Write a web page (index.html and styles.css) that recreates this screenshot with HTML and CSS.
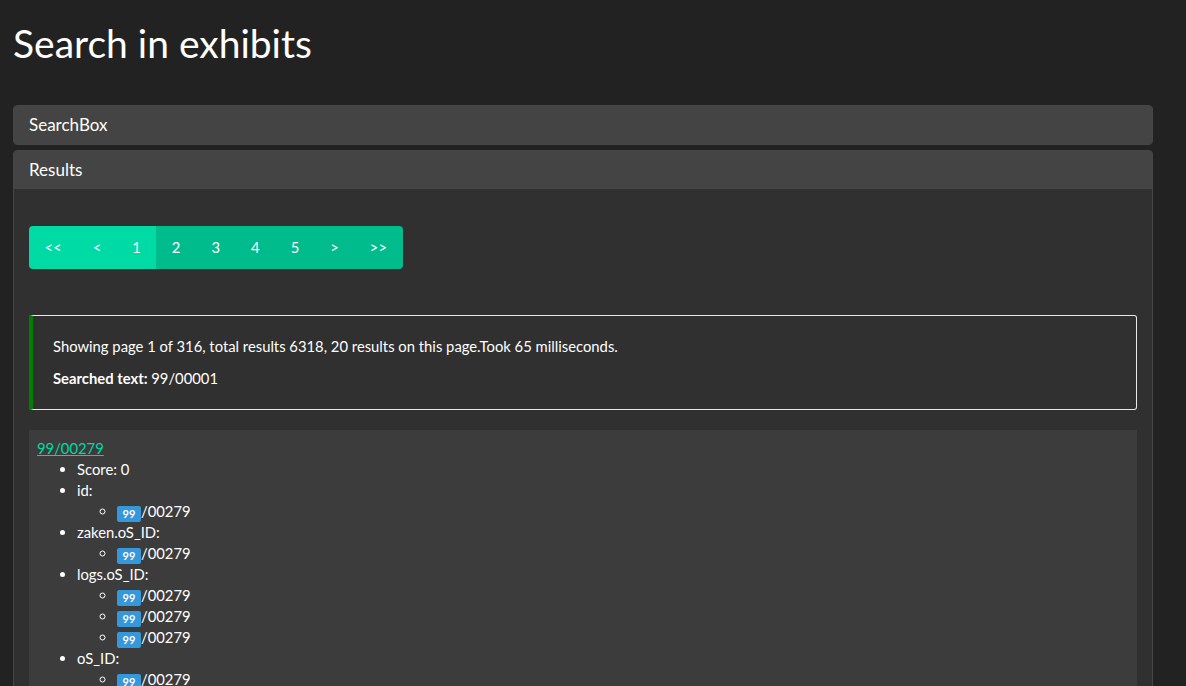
FILE: index.html
```html
<!DOCTYPE html>
<html>
<head>
<meta charset="utf-8">
<link rel="stylesheet" href="styles.css">
</head>
<body>
<div class="container">
  <h1 class="title">Search in exhibits</h1>
  <div class="panel">
    <div class="panel-heading">SearchBox</div>
  </div>
  <div class="panel">
    <div class="panel-heading">Results</div>
    <div class="panel-body">
      <ul class="pagination">
        <li class="light"><span>&lt;&lt;</span></li>
        <li class="light"><span>&lt;</span></li>
        <li class="light"><span>1</span></li>
        <li><span>2</span></li>
        <li><span>3</span></li>
        <li><span>4</span></li>
        <li><span>5</span></li>
        <li><span>&gt;</span></li>
        <li><span>&gt;&gt;</span></li>
      </ul>
      <div class="alert">
        <p>Showing page 1 of 316, total results 6318, 20 results on this page.Took 65 milliseconds.</p>
        <p><strong>Searched text:</strong> 99/00001</p>
      </div>
      <div class="result">
        <a href="#" class="result-link">99/00279</a>
        <ul class="fields">
          <li>Score: 0</li>
          <li>id:
            <ul><li><span class="badge">99</span>/00279</li></ul>
          </li>
          <li>zaken.oS_ID:
            <ul><li><span class="badge">99</span>/00279</li></ul>
          </li>
          <li>logs.oS_ID:
            <ul>
              <li><span class="badge">99</span>/00279</li>
              <li><span class="badge">99</span>/00279</li>
              <li><span class="badge">99</span>/00279</li>
            </ul>
          </li>
          <li>oS_ID:
            <ul><li><span class="badge">99</span>/00279</li></ul>
          </li>
        </ul>
      </div>
    </div>
  </div>
</div>
</body>
</html>
```

FILE: styles.css
```css
html, body {
  margin: 0;
  padding: 0;
  background: #222222;
  color: #ffffff;
  font-family: Lato, "Open Sans", sans-serif;
  font-size: 14.8px;
  line-height: 21px;
}
.container {
  width: 1140px;
  padding: 0 0 0 13px;
}
.title {
  margin: 0;
  padding-top: 20px;
  font-size: 39px;
  font-weight: 400;
  line-height: 46px;
  height: 85px;
}
.panel {
  background: #303030;
  border: 1px solid #464646;
  border-radius: 4px;
  margin-bottom: 5px;
  overflow: hidden;
}
.panel-heading {
  background: #444444;
  height: 38px;
  line-height: 38px;
  padding: 0 15px;
  font-size: 17px;
}
.panel-body {
  padding: 37px 15px 0 15px;
}
.pagination {
  display: inline-flex;
  list-style: none;
  margin: 0 0 46px 0;
  padding: 0;
  border-radius: 4px;
  overflow: hidden;
}
.pagination li span {
  display: block;
  height: 43px;
  line-height: 43px;
  padding: 0 15.5px;
  background: #00bc8c;
  color: #ffffff;
  font-size: 14.8px;
}
.pagination li.light span {
  background: #00daa5;
}
.alert {
  border: 1px solid #e8e8e8;
  border-left: 4px solid #008000;
  border-radius: 0 3px 3px 0;
  padding: 20px 20px 20px 20px;
  margin-bottom: 20px;
}
.alert p {
  margin: 0 0 11px 0;
}
.alert p:last-child {
  margin: 0;
}
.alert strong {
  font-weight: 700;
}
.result {
  background: #3c3c3c;
  padding: 8px 8px 20px 8px;
}
.result-link {
  color: #00d9a3;
  text-decoration: underline;
}
.fields {
  margin: 0;
  padding-left: 40px;
  list-style: disc;
}
.fields ul {
  margin: 0;
  padding-left: 40px;
  list-style: circle;
}
.badge {
  display: inline-block;
  background: #3498db;
  color: #ffffff;
  font-size: 11px;
  font-weight: 700;
  line-height: 16px;
  height: 16px;
  width: 24px;
  text-align: center;
  border-radius: 2px;
  vertical-align: top;
  margin-top: 5px;
}
```
